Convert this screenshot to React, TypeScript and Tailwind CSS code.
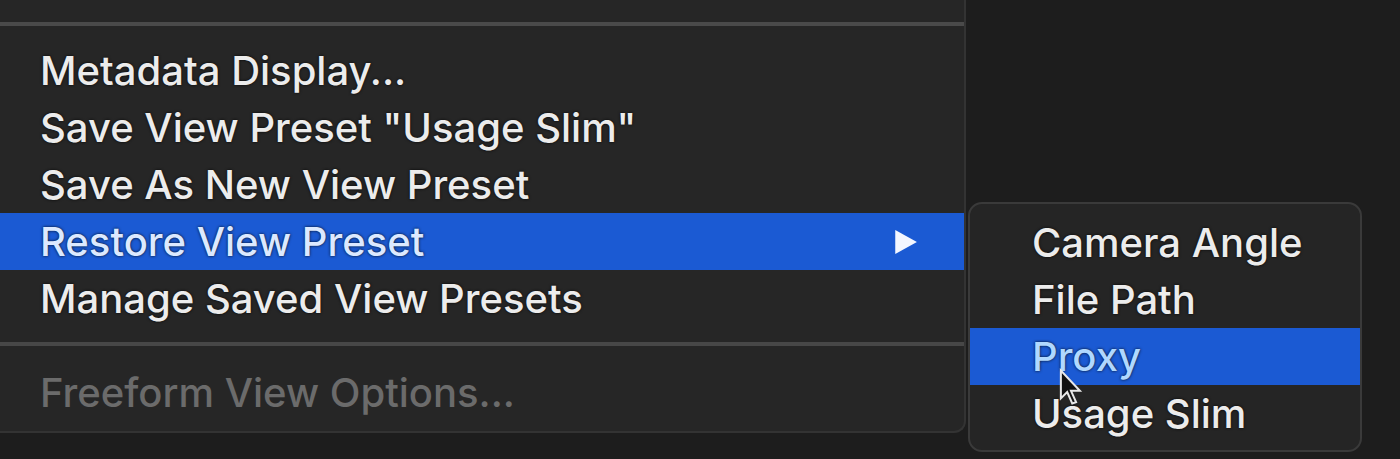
import type { ReactNode } from 'react';

const font = { fontFamily: 'Inter, "Liberation Sans", Arial, sans-serif' };

function MenuRow({
  children,
  active,
  disabled,
  arrow,
}: {
  children: ReactNode;
  active?: boolean;
  disabled?: boolean;
  arrow?: boolean;
}) {
  return (
    <div
      className={`flex h-[57px] items-center justify-between pl-[40px] pr-[46px] text-[40px] font-medium leading-none [text-shadow:0_0_3px_rgba(0,0,0,0.9)] ${
        active ? 'bg-[#1b5ad3] text-[#dce9ff]' : disabled ? 'text-[#6b6b6b] [text-shadow:none]' : 'text-[#ececec]'
      }`}
    >
      <span>{children}</span>
      {arrow && (
        <svg viewBox="0 0 24 24" className="h-[26px] w-[26px]" fill="#f4f7ff">
          <path d="M3 1 L23 12 L3 23 Z" />
        </svg>
      )}
    </div>
  );
}

function SubRow({ children, active }: { children: ReactNode; active?: boolean }) {
  return (
    <div
      className={`flex h-[57px] items-center pl-[62px] text-[40px] font-medium leading-none [text-shadow:0_0_3px_rgba(0,0,0,0.9)] ${
        active ? 'bg-[#1b5ad3] text-[#b0d8ff]' : 'text-[#ececec]'
      }`}
    >
      {children}
    </div>
  );
}

export default function App() {
  return (
    <div className="flex h-[459px] w-[1400px] items-start overflow-hidden bg-[#1d1d1d]" style={font}>
      {/* Main context menu */}
      <div className="flex w-[966px] shrink-0 flex-col rounded-br-[12px] border-r-2 border-b-2 border-[#333333] bg-[#262626] pb-[10px]">
        <div className="h-[22px]" />
        <div className="h-[4px] bg-[#4a4a4a]" />
        <div className="h-[16px]" />
        <MenuRow>Metadata Display...</MenuRow>
        <MenuRow>Save View Preset "Usage Slim"</MenuRow>
        <MenuRow>Save As New View Preset</MenuRow>
        <MenuRow active arrow>
          Restore View Preset
        </MenuRow>
        <MenuRow>Manage Saved View Presets</MenuRow>
        <div className="h-[15px]" />
        <div className="h-[4px] bg-[#474747]" />
        <div className="h-[18px]" />
        <MenuRow disabled>Freeform View Options...</MenuRow>
      </div>

      {/* Submenu */}
      <div className="relative mt-[202px] ml-[2px] w-[394px] shrink-0 overflow-hidden rounded-[14px] border-2 border-[#3a3a3a] bg-[#252525] pt-[10px] pb-[8px]">
        <SubRow>Camera Angle</SubRow>
        <SubRow>File Path</SubRow>
        <SubRow active>Proxy</SubRow>
        <SubRow>Usage Slim</SubRow>

        {/* mouse cursor */}
        <svg
          viewBox="0 0 20 30"
          className="absolute top-[164px] left-[88px] h-[38px] w-[26px]"
        >
          <path d="M2 2 L2 24 L7 19 L11 28 L14 27 L10 18 L17 18 Z" fill="#111" stroke="#e8e8e8" strokeWidth="1.6" />
        </svg>
      </div>
    </div>
  );
}
